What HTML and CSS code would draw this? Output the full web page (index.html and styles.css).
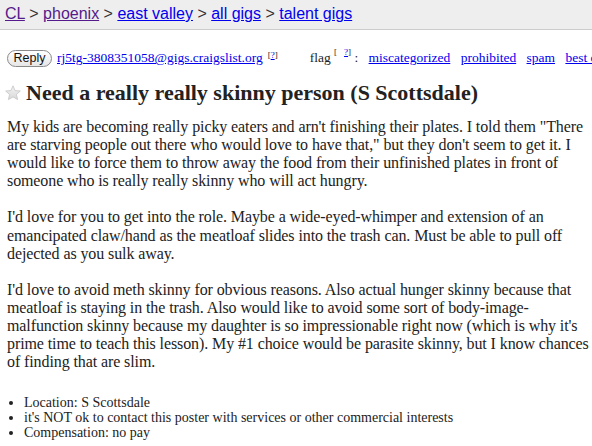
FILE: index.html
```html
<!DOCTYPE html>
<html>
<head>
<meta charset="utf-8">
<link rel="stylesheet" href="styles.css">
</head>
<body>
<div class="bchead">
  <a class="visited" href="#">CL</a> &gt; <a class="visited" href="#">phoenix</a> &gt; <a href="#">east valley</a> &gt; <a href="#">all gigs</a> &gt; <a href="#">talent gigs</a>
</div>
<div class="page">
  <div class="replyrow">
    <span class="replybtn">Reply</span>
    <a class="email" href="#">rj5tg-3808351058@gigs.craigslist.org</a>
    <sup class="q">[<a href="#">?</a>]</sup>
    <span class="flag">flag <sup class="q">[<a href="#">?</a>]</sup> :
      <a href="#">miscategorized</a>
      <a href="#">prohibited</a>
      <a href="#">spam</a>
      <a href="#">best of</a>
    </span>
  </div>
  <h2 class="title"><svg class="star" width="16" height="16" viewBox="0 0 16 16"><defs><linearGradient id="g" x1="0" y1="0" x2="0" y2="1"><stop offset="0" stop-color="#f4f4f4"/><stop offset="1" stop-color="#d8d8d8"/></linearGradient></defs><polygon points="8,0.8 10.1,5.6 15.3,6 11.4,9.4 12.6,14.6 8,11.9 3.4,14.6 4.6,9.4 0.7,6 5.9,5.6" fill="url(#g)" stroke="#c4c4c4" stroke-width="0.8"/></svg>Need a really really skinny person (S Scottsdale)</h2>
  <div class="body">My kids are becoming really picky eaters and arn't finishing their plates. I told them "There are starving people out there who would love to have that," but they don't seem to get it. I would like to force them to throw away the food from their unfinished plates in front of someone who is really really skinny who will act hungry.<br><br>I'd love for you to get into the role. Maybe a wide-eyed-whimper and extension of an emancipated claw/hand as the meatloaf slides into the trash can. Must be able to pull off dejected as you sulk away.<br><br>I'd love to avoid meth skinny for obvious reasons. Also actual hunger skinny because that meatloaf is staying in the trash. Also would like to avoid some sort of body-image-malfunction skinny because my daughter is so impressionable right now (which is why it's prime time to teach this lesson). My #1 choice would be parasite skinny, but I know chances of finding that are slim.</div>
  <ul class="notices">
    <li>Location: S Scottsdale</li>
    <li>it's NOT ok to contact this poster with services or other commercial interests</li>
    <li>Compensation: no pay</li>
  </ul>
</div>
</body>
</html>
```

FILE: styles.css
```css
html, body {
  margin: 0;
  padding: 0;
  background: #fff;
  overflow: hidden;
}
body {
  font-family: "Liberation Serif", "Times New Roman", serif;
  color: #222;
}
a { color: #0000ee; }
a.visited { color: #551a8b; }
.bchead {
  height: 30px;
  box-sizing: border-box;
  background: #eeeeee;
  border-bottom: 1px solid #cccccc;
  font-family: "Liberation Sans", Arial, sans-serif;
  font-size: 16px;
  line-height: 20px;
  padding: 4px 0 0 5px;
  color: #333;
  white-space: nowrap;
}
.page {
  padding: 0 0 0 7px;
}
.replyrow {
  margin-top: 19px;
  height: 18px;
  display: flex;
  align-items: center;
  white-space: nowrap;
  font-size: 13.5px;
}
.replyrow > * { flex-shrink: 0; }
.replybtn {
  display: inline-block;
  box-sizing: border-box;
  width: 45px;
  height: 17px;
  border: 1px solid #8a8a8a;
  border-radius: 9px;
  background: linear-gradient(#ffffff, #e6e6e6);
  font-family: "Liberation Sans", Arial, sans-serif;
  font-size: 12.5px;
  line-height: 15px;
  text-align: center;
  color: #111;
  margin-right: 5px;
}
.email { margin-right: 5px; }
.q {
  font-size: 9px;
  vertical-align: top;
  position: relative;
  top: -3px;
}
.q a { color: #0000ee; }
.flag {
  margin-left: 32px;
  color: #222;
}
.flag a { margin-left: 7px; }
.title {
  margin: 12px 0 0 -2px;
  font-size: 22px;
  font-weight: bold;
  line-height: 28px;
  color: #222;
  display: flex;
  align-items: center;
  white-space: nowrap;
}
.star {
  margin-right: 5px;
  flex: none;
}
.body {
  margin-top: 11px;
  font-size: 16px;
  line-height: 18.1px;
  letter-spacing: -0.1px;
}
.notices {
  margin: 24px 0 0 0;
  padding-left: 17px;
  font-size: 14px;
  line-height: 15px;
}
```
